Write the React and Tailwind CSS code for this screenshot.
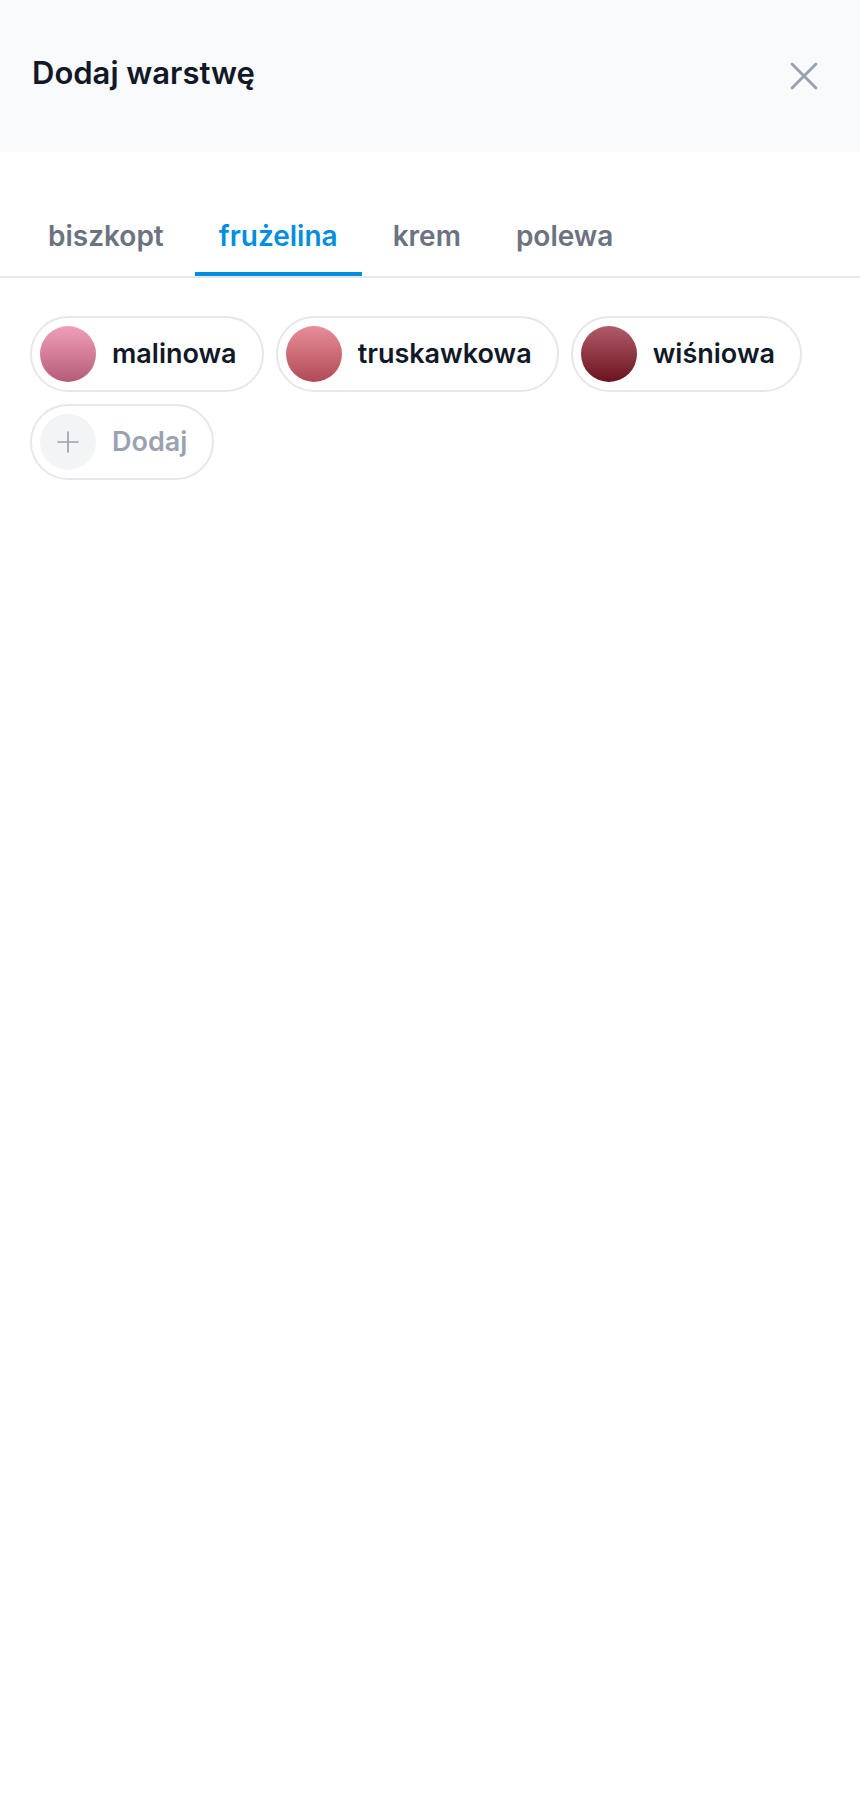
import React, { useState } from "react";

const layerTypes = [
  {
    name: "biszkopt",
    flavours: [],
  },
  {
    name: "frużelina",
    flavours: [
      { name: "malinowa", swatch: "from-[#f09fb8] to-[#b65c78]" },
      { name: "truskawkowa", swatch: "from-[#e98d98] to-[#b04a57]" },
      { name: "wiśniowa", swatch: "from-[#b05c6a] to-[#6b1020]" },
    ],
  },
  {
    name: "krem",
    flavours: [],
  },
  {
    name: "polewa",
    flavours: [],
  },
];

const Chip = ({ children, label, muted }) => (
  <button
    type="button"
    className={`flex items-center gap-4 rounded-full border-2 border-gray-200 bg-white p-2 pr-[25px] text-[27px] leading-10 font-semibold ${
      muted ? "text-[#9aa2b1]" : "text-[#111827]"
    }`}
  >
    {children}
    <span>{label}</span>
  </button>
);

const App = () => {
  const [activeTab, setActiveTab] = useState("frużelina");
  const active = layerTypes.find((type) => type.name === activeTab);

  return (
    <div className="min-h-screen bg-white font-['Inter',sans-serif] text-[#111827]">
      <header className="flex items-start justify-between bg-[#f9fafc] px-8 py-13">
        <h1 className="text-[31px] leading-[42px] font-semibold">Dodaj warstwę</h1>
        <button type="button" aria-label="Zamknij" className="text-[#9aa2b1]">
          <svg className="size-12" viewBox="0 0 24 24" fill="none" stroke="currentColor" strokeWidth="1.5" strokeLinecap="round" strokeLinejoin="round">
            <path d="M6 18L18 6M6 6l12 12" />
          </svg>
        </button>
      </header>

      <nav className="mt-12 flex gap-[7px] border-b-2 border-gray-200 px-6">
        {layerTypes.map((type) => (
          <button
            key={type.name}
            type="button"
            onClick={() => setActiveTab(type.name)}
            className={`border-b-4 px-6 py-4 text-[28px] leading-10 font-semibold ${
              type.name === activeTab
                ? "border-[#028ee0] text-[#028ee0]"
                : "border-transparent text-[#6b7280]"
            }`}
          >
            {type.name}
          </button>
        ))}
      </nav>

      <main className="flex flex-wrap gap-3 px-[30px] py-[38px]">
        {active.flavours.map((flavour) => (
          <Chip key={flavour.name} label={flavour.name}>
            <span className={`size-14 rounded-full bg-linear-to-b ${flavour.swatch}`} />
          </Chip>
        ))}
        <Chip label="Dodaj" muted>
          <span className="flex size-14 items-center justify-center rounded-full bg-gray-100">
            <svg className="size-10" viewBox="0 0 24 24" fill="none" stroke="currentColor" strokeWidth="1" strokeLinecap="round" strokeLinejoin="round">
              <path d="M12 6v12M6 12h12" />
            </svg>
          </span>
        </Chip>
      </main>
    </div>
  );
};

export default App;
